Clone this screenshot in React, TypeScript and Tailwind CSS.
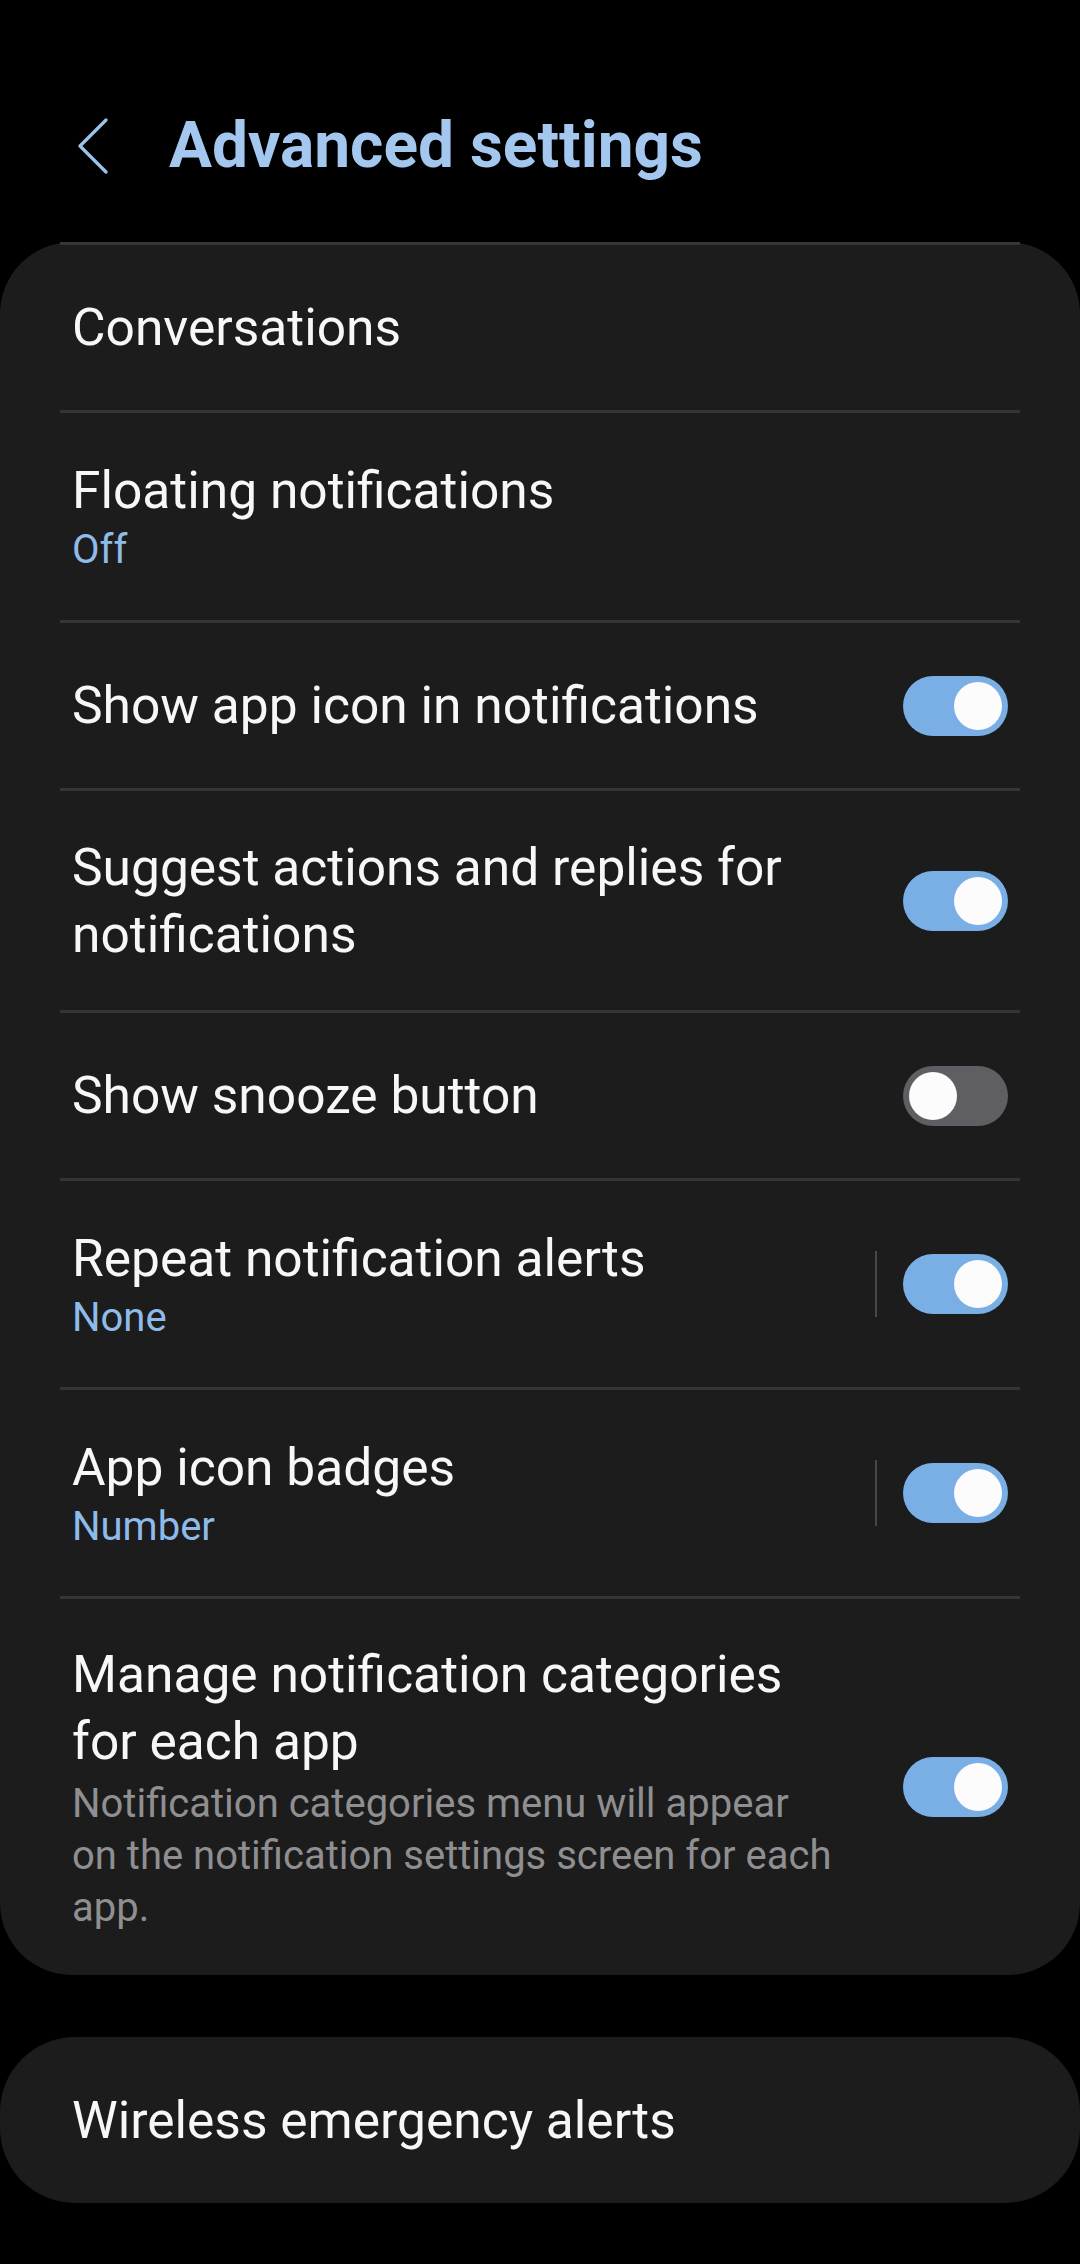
import React from 'react';

type Row = {
  title: React.ReactNode;
  sub?: string;
  desc?: React.ReactNode;
  toggle?: boolean;
  divider?: boolean;
  height: string;
};

const rows: Row[] = [
  { title: 'Conversations', height: 'h-[165px]' },
  { title: 'Floating notifications', sub: 'Off', height: 'h-[207px]' },
  { title: 'Show app icon in notifications', toggle: true, height: 'h-[165px]' },
  {
    title: (
      <>
        Suggest actions and replies for
        <br />
        notifications
      </>
    ),
    toggle: true,
    height: 'h-[219px]',
  },
  { title: 'Show snooze button', toggle: false, height: 'h-[165px]' },
  { title: 'Repeat notification alerts', sub: 'None', toggle: true, divider: true, height: 'h-[206px]' },
  { title: 'App icon badges', sub: 'Number', toggle: true, divider: true, height: 'h-[206px]' },
  {
    title: (
      <>
        Manage notification categories
        <br />
        for each app
      </>
    ),
    desc: (
      <>
        Notification categories menu will appear
        <br />
        on the notification settings screen for each
        <br />
        app.
      </>
    ),
    toggle: true,
    height: 'h-[376px]',
  },
];

const Toggle = ({ on }: { on: boolean }) => (
  <div
    className={
      'flex h-[60px] w-[105px] shrink-0 items-center rounded-full px-[6px] ' +
      (on ? 'justify-end bg-[#7aafe6]' : 'justify-start bg-[#5f5f63]')
    }
  >
    <div className="h-[48px] w-[48px] rounded-full bg-[#fcfcfc]" />
  </div>
);

const SettingRow = ({ row }: { row: Row }) => (
  <div className={`flex items-center pl-[72px] pr-[72px] ${row.height}`}>
    <div className="flex-1 min-w-0">
      <div className="text-[51.5px] leading-[67px] text-[#f7f7f7]">{row.title}</div>
      {row.sub && <div className="text-[40px] leading-[52px] text-[#8fbbea]">{row.sub}</div>}
      {row.desc && (
        <div className="pt-[3px] text-[40px] leading-[52px] text-[#8f8f91]">{row.desc}</div>
      )}
    </div>
    {row.toggle !== undefined && (
      <div className="flex items-center">
        {row.divider && <div className="mr-[26px] h-[66px] w-[2px] bg-[#474747]" />}
        <Toggle on={row.toggle} />
      </div>
    )}
  </div>
);

const Divider = () => <div className="mx-[60px] h-[3px] bg-[#353535]" />;

export default function App() {
  return (
    <div
      className="min-h-[2264px] w-[1080px] bg-black"
      style={{ fontFamily: 'Roboto, "Noto Sans", sans-serif' }}
    >
      {/* Header */}
      <div className="flex h-[242px] items-start pt-[108px]">
        <div className="flex h-[75px] items-center pl-[77px]">
          <svg width="32" height="56" viewBox="0 0 32 56" fill="none">
            <path
              d="M29 2 L3 28 L29 54"
              stroke="#9cc3ec"
              strokeWidth="3.2"
              strokeLinecap="round"
              strokeLinejoin="round"
            />
          </svg>
          <h1 className="ml-[60px] text-[64px] font-bold leading-[75px] text-[#a4c7ef]">
            Advanced settings
          </h1>
        </div>
      </div>

      {/* Main card */}
      <div className="rounded-[72px] bg-[#1c1c1c]">
        <Divider />
        {rows.map((row, i) => (
          <React.Fragment key={i}>
            {i > 0 && <Divider />}
            <SettingRow row={row} />
          </React.Fragment>
        ))}
      </div>

      {/* Second card */}
      <div className="mt-[62px] flex h-[166px] items-center rounded-[75px] bg-[#1c1c1c] pl-[72px]">
        <div className="text-[51.5px] leading-[67px] text-[#f7f7f7]">Wireless emergency alerts</div>
      </div>
    </div>
  );
}
